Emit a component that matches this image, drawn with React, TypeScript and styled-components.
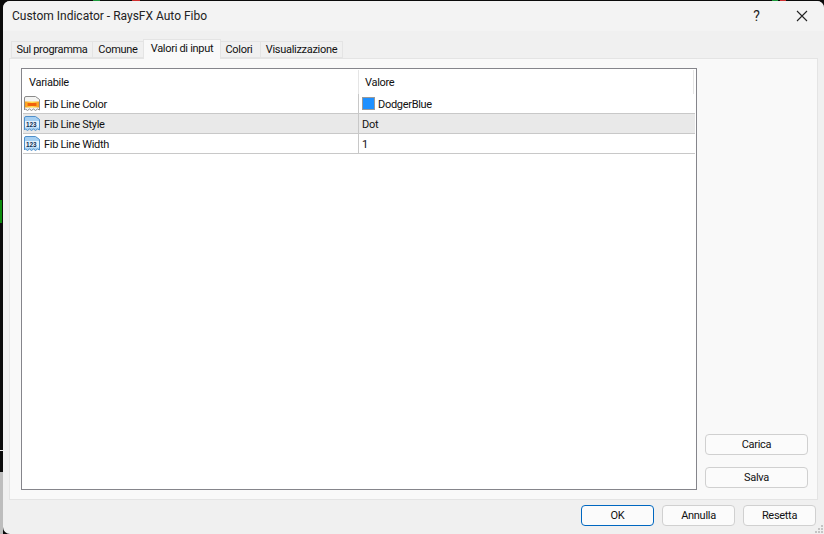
import React from 'react'
import styled, { createGlobalStyle } from 'styled-components'

const GlobalStyle = createGlobalStyle`
  html, body {
    margin: 0;
    padding: 0;
    background: #0a0a0a;
    overflow: hidden;
  }
  body {
    font-family: Roboto, "Liberation Sans", Arial, sans-serif;
    font-size: 11px;
    letter-spacing: -0.3px;
    white-space: nowrap;
    color: #111;
  }
`

const Screen = styled.div`
  width: 824px;
  height: 534px;
  padding: 1px 0 0 3px;
  box-sizing: border-box;
  display: flex;
  background:
    linear-gradient(#0a8a0a, #0a8a0a) 0 200px / 2px 23px no-repeat,
    linear-gradient(#bdbdbd, #bdbdbd) 0 472px / 3px 62px no-repeat,
    linear-gradient(#e8e8e8, #e8e8e8) 0 450px / 3px 1px no-repeat,
    linear-gradient(#1d9a3c, #1d9a3c) 93px 0 / 7px 1px no-repeat,
    linear-gradient(#d03030, #d03030) 132px 0 / 8px 1px no-repeat,
    linear-gradient(#1d9a3c, #1d9a3c) 772px 0 / 6px 1px no-repeat,
    linear-gradient(#d03030, #d03030) 780px 0 / 6px 1px no-repeat,
    #0a0a0a;
`

const Dialog = styled.div`
  flex: 1;
  display: flex;
  flex-direction: column;
  background: #f0f0f0;
  border-radius: 7px 7px 0 7px;
  overflow: hidden;
  position: relative;
`

const TitleBar = styled.div`
  height: 30px;
  display: flex;
  align-items: center;
  padding-left: 9px;
  background: #f3f3f3;
  font-size: 12px;
  letter-spacing: 0;
  color: #222;
`

const TitleText = styled.div`
  flex: 1;
`

const TitleButton = styled.div`
  width: 45px;
  height: 30px;
  display: flex;
  align-items: center;
  justify-content: center;
  font-size: 14px;
`

const Body = styled.div`
  flex: 1;
  display: flex;
  flex-direction: column;
  padding: 8px 6px 0 6px;
`

const TabStrip = styled.div`
  display: flex;
  align-items: flex-start;
  height: 19px;
  padding-left: 3px;
  position: relative;
  z-index: 1;
`

const Tab = styled.div<{ $active?: boolean; $w: number; $inset?: number }>`
  box-sizing: border-box;
  height: ${p => (p.$active ? 20 : 17)}px;
  margin-top: ${p => (p.$active ? 0 : 2)}px;
  width: ${p => p.$w}px;
  display: flex;
  align-items: center;
  justify-content: center;
  background: ${p => (p.$active ? '#f9f9f9' : '#f0f0f0')};
  border: 1px solid #e4e4e4;
  border-bottom: ${p => (p.$active ? 'none' : '1px solid #e4e4e4')};
  margin-left: -1px;
  padding-bottom: ${p => (p.$active ? 3 : 0)}px;
  padding-right: ${p => p.$inset ?? 0}px;
`

const Panel = styled.div`
  box-sizing: border-box;
  height: 442px;
  background: #f9f9f9;
  border: 1px solid #e4e4e4;
  padding: 9px 9px 9px 11px;
  display: flex;
  gap: 8px;
`

const ListBox = styled.div`
  width: 676px;
  box-sizing: border-box;
  background: #fff;
  border: 1px solid #85858b;
  padding: 1px 1px 0 1px;
`

const HeaderRow = styled.div`
  display: flex;
  height: 24px;
  align-items: center;
`

const HeaderCell = styled.div<{ $w?: number }>`
  box-sizing: border-box;
  height: 100%;
  display: flex;
  align-items: center;
  padding-left: 6px;
  border-right: 1px solid #e5e5e5;
  ${p => (p.$w ? `width: ${p.$w}px;` : 'flex: 1; margin-right: 1px;')}
`

const Row = styled.div<{ $selected?: boolean }>`
  display: flex;
  height: 20px;
  box-sizing: border-box;
  border-bottom: 1px solid #c8c8c8;
  background: ${p => (p.$selected ? '#e9e9e9' : '#fff')};
`

const NameCell = styled.div`
  width: 336px;
  box-sizing: border-box;
  display: flex;
  align-items: center;
  gap: 4px;
  padding-left: 1px;
  border-right: 1px solid #c8c8c8;
`

const ValueCell = styled.div`
  flex: 1;
  display: flex;
  align-items: center;
  gap: 3px;
  padding-left: 3px;
`

const CellText = styled.span`
  padding-top: 1px;
`

const Swatch = styled.div`
  width: 13px;
  height: 13px;
  box-sizing: border-box;
  background: #1e90ff;
  border: 1px solid #9a9a9a;
`

const SideColumn = styled.div`
  flex: 1;
  display: flex;
  flex-direction: column;
  justify-content: flex-end;
  gap: 12px;
  padding-bottom: 2px;
`

const Btn = styled.div<{ $primary?: boolean; $w?: number }>`
  box-sizing: border-box;
  height: 21px;
  width: ${p => p.$w ?? 73}px;
  display: flex;
  align-items: center;
  justify-content: center;
  background: #fbfbfb;
  border: 1px solid ${p => (p.$primary ? '#0067c0' : '#d0d0d0')};
  border-radius: 4px;
`

const Footer = styled.div`
  flex: 1;
  display: flex;
  justify-content: flex-end;
  align-items: flex-start;
  gap: 8px;
  padding: 5px 2px 0 0;
`

const Grip = styled.svg`
  position: absolute;
  right: 1px;
  bottom: 1px;
`

const paperEdge = 'M0.5 2 Q0.5 0.5 2 0.5 H11.5 L15.5 3.5 V14 L13.5 13 L11.5 14.5 L9.5 13 L7.5 14.5 L5.5 13 L3.5 14.5 L1.5 13 L0.5 14 Z'

const ColorIcon = () => (
  <svg width="16" height="15" viewBox="0 0 16 15">
    <defs>
      <linearGradient id="colorBar" x1="0" y1="0" x2="1" y2="0">
        <stop offset="0" stopColor="#f79a1d" />
        <stop offset="0.5" stopColor="#ffe24d" />
        <stop offset="1" stopColor="#f79a1d" />
      </linearGradient>
    </defs>
    <path d={paperEdge} fill="#f4f4f2" stroke="#8a8a8a" />
    <rect x="1" y="5.5" width="14" height="6" fill="url(#colorBar)" />
    <rect x="3.5" y="7" width="9" height="3" fill="#f2610c" />
  </svg>
)

const NumberIcon = () => (
  <svg width="16" height="15" viewBox="0 0 16 15">
    <path d={paperEdge} fill="#a5cff2" stroke="#4f8fca" />
    <rect x="1" y="5" width="14" height="6.5" fill="#e3f1fc" />
    <text x="2" y="10.8" fontSize="6.4" fontWeight="700" letterSpacing="0" fontFamily="Liberation Sans" fill="#0d2f55">123</text>
  </svg>
)

const CloseIcon = () => (
  <svg width="12" height="12" viewBox="0 0 12 12">
    <path d="M1 1 L11 11 M11 1 L1 11" stroke="#222" strokeWidth="1.1" fill="none" />
  </svg>
)

const tabs = [
  { label: 'Sul programma', w: 82 },
  { label: 'Comune', w: 52 },
  { label: 'Valori di input', w: 78, active: true },
  { label: 'Colori', w: 41, inset: 3 },
  { label: 'Visualizzazione', w: 83 },
]

const rows = [
  { name: 'Fib Line Color', value: 'DodgerBlue', color: true },
  { name: 'Fib Line Style', value: 'Dot', selected: true },
  { name: 'Fib Line Width', value: '1' },
]

const App = () => {
  return (
    <Screen>
      <GlobalStyle />
      <Dialog>
        <TitleBar>
          <TitleText>Custom Indicator - RaysFX Auto Fibo</TitleText>
          <TitleButton>?</TitleButton>
          <TitleButton><CloseIcon /></TitleButton>
        </TitleBar>
        <Body>
          <TabStrip>
            {tabs.map(t => (
              <Tab key={t.label} $active={t.active} $w={t.w} $inset={t.inset}>{t.label}</Tab>
            ))}
          </TabStrip>
          <Panel>
            <ListBox>
              <HeaderRow>
                <HeaderCell $w={336}>Variabile</HeaderCell>
                <HeaderCell>Valore</HeaderCell>
              </HeaderRow>
              {rows.map(r => (
                <Row key={r.name} $selected={r.selected}>
                  <NameCell>
                    {r.color ? <ColorIcon /> : <NumberIcon />}
                    <CellText>{r.name}</CellText>
                  </NameCell>
                  <ValueCell>
                    {r.color && <Swatch />}
                    <CellText>{r.value}</CellText>
                  </ValueCell>
                </Row>
              ))}
            </ListBox>
            <SideColumn>
              <Btn $w={103}>Carica</Btn>
              <Btn $w={103}>Salva</Btn>
            </SideColumn>
          </Panel>
          <Footer>
            <Btn $primary>OK</Btn>
            <Btn>Annulla</Btn>
            <Btn>Resetta</Btn>
          </Footer>
        </Body>
        <Grip width="8" height="8" viewBox="0 0 8 8">
          <path d="M6 0h2v2H6zM3 3h2v2H3zM6 3h2v2H6zM0 6h2v2H0zM3 6h2v2H3zM6 6h2v2H6z" fill="#c4c4c4" />
        </Grip>
      </Dialog>
    </Screen>
  )
}

export default App
